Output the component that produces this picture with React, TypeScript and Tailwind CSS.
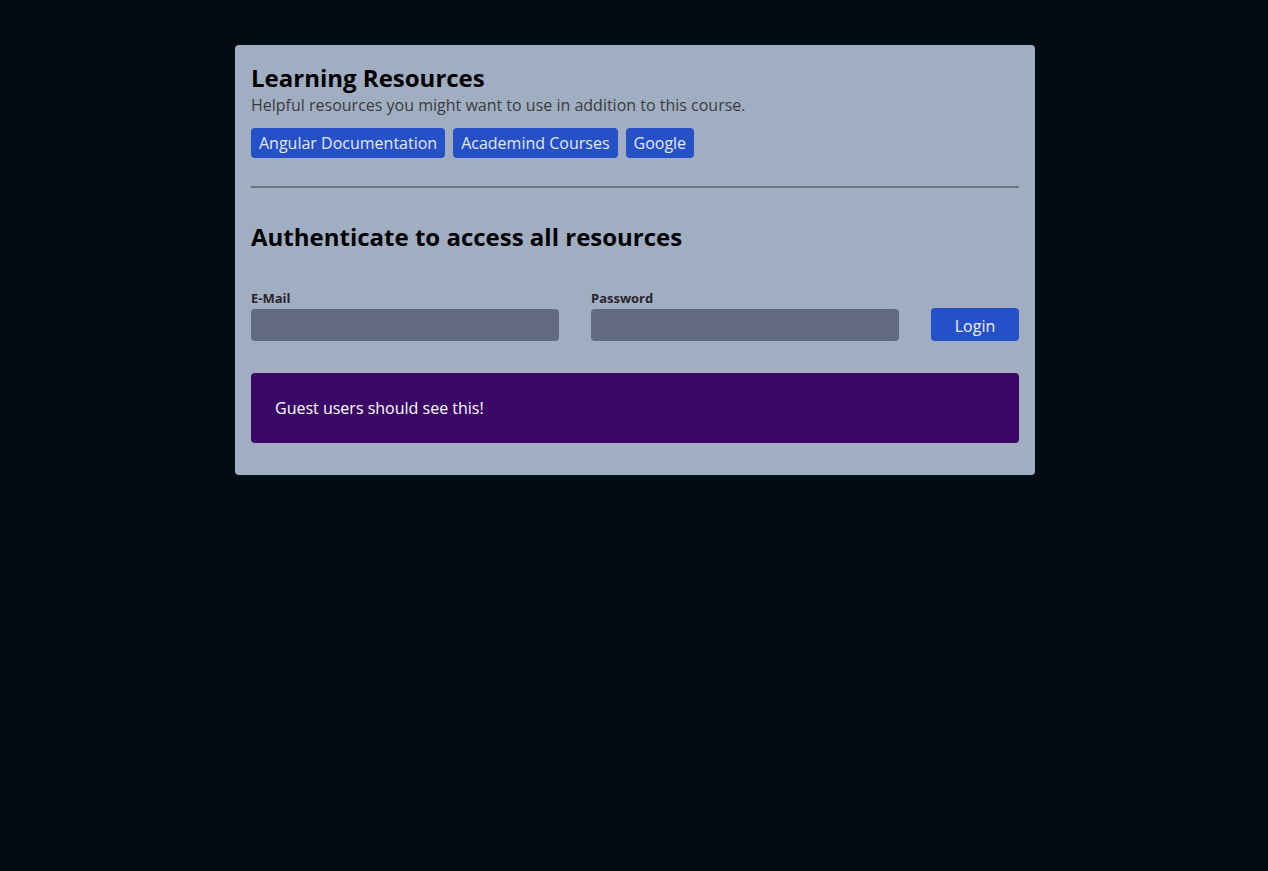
import React from "react";

export default function App() {
  return (
    <div className="flex min-h-[871px] w-full justify-center bg-[#010d13] pl-[2px] pt-[45px]" style={{ fontFamily: '"Open Sans", sans-serif' }}>
      <div className="h-fit w-[800px] rounded-[4px] bg-[#a1aec2] px-4 pt-4 pb-8">
        <h1 className="pt-[1px] text-2xl leading-[31px] font-bold text-black">Learning Resources</h1>
        <p className="text-base leading-6 text-[#3b3b3f]">Helpful resources you might want to use in addition to this course.</p>
        <div className="mt-[11px] flex gap-2">
          {["Angular Documentation", "Academind Courses", "Google"].map((t) => (
            <a key={t} className="block h-[30px] rounded-[4px] bg-[#2650c8] px-2 text-base leading-[30px] text-[#e3eaff]">
              {t}
            </a>
          ))}
        </div>
        <div className="mt-[28px] h-[2px] bg-[#6c7383]" />
        <h2 className="mt-[33px] text-2xl font-bold text-black">Authenticate to access all resources</h2>
        <div className="mt-[36px] flex items-end gap-8">
          <div className="flex-1">
            <label className="block pb-[2px] text-[13px] font-bold leading-[18px] text-[#29252d]">E-Mail</label>
            <div className="h-[32px] rounded-[4px] bg-[#626a80]" />
          </div>
          <div className="flex-1">
            <label className="block pb-[2px] text-[13px] font-bold leading-[18px] text-[#29252d]">Password</label>
            <div className="h-[32px] rounded-[4px] bg-[#626a80]" />
          </div>
          <button className="h-[33px] w-[88px] rounded-[4px] bg-[#2650c8] pt-[2px] text-base leading-6 text-[#eef2ff]">Login</button>
        </div>
        <div className="mt-8 rounded-[4px] bg-[#3b0767] px-6 py-[23px] text-base leading-6 text-white">
          Guest users should see this!
        </div>
      </div>
    </div>
  );
}
